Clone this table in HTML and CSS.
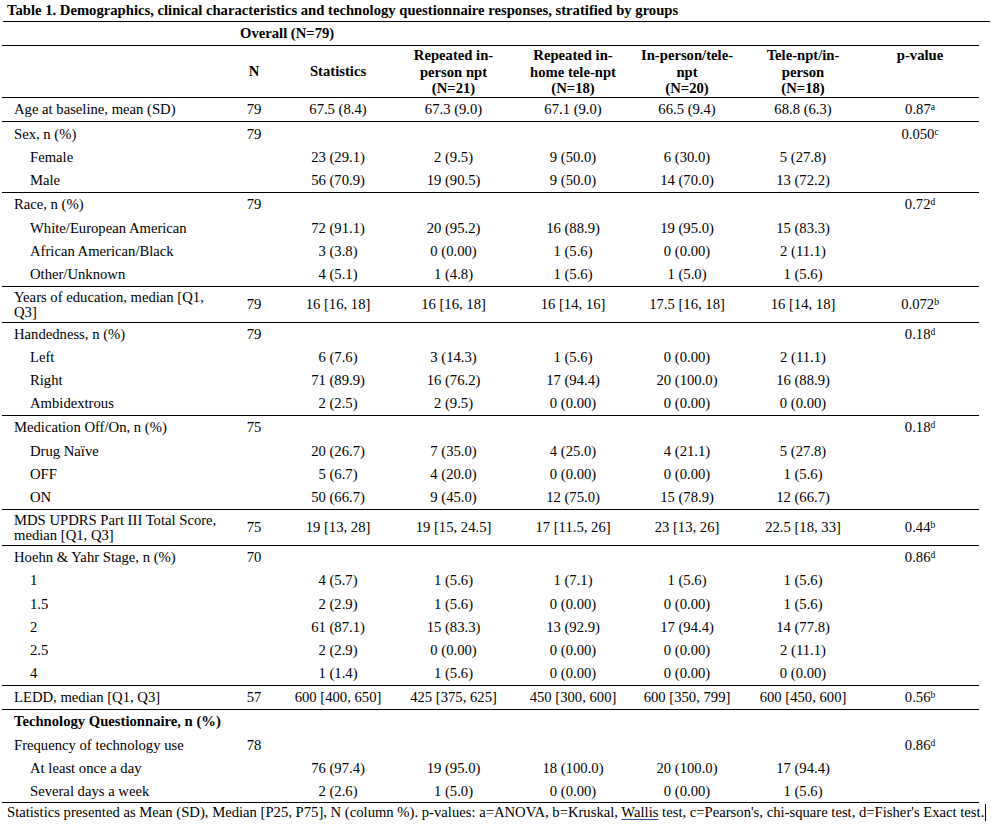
FILE: index.html
```html
<!DOCTYPE html>
<html>
<head>
<meta charset="utf-8">
<title>Table 1</title>
<link rel="stylesheet" href="styles.css">
</head>
<body>
<div class="title">Table 1. Demographics, clinical characteristics and technology questionnaire responses, stratified by groups</div>
<table class="t">
<colgroup>
<col class="c-label"><col class="c-n"><col class="c-stat"><col class="c-g1"><col class="c-g2"><col class="c-g3"><col class="c-g4"><col class="c-p">
</colgroup>
<tr class="h24 sep"><td></td><td colspan="2" class="overall">Overall (N=79)</td><td></td><td></td><td></td><td></td><td></td></tr>
<tr class="head sep"><th></th><th class="mid">N</th><th class="mid">Statistics</th><th>Repeated in-<br>person npt<br>(N=21)</th><th>Repeated in-<br>home tele-npt<br>(N=18)</th><th>In-person/tele-<br>npt<br>(N=20)</th><th>Tele-npt/in-<br>person<br>(N=18)</th><th>p-value</th></tr>
<tr class="h24 sep"><td class="lab">Age at baseline, mean (SD)</td><td>79</td><td>67.5 (8.4)</td><td>67.3 (9.0)</td><td>67.1 (9.0)</td><td>66.5 (9.4)</td><td>68.8 (6.3)</td><td>0.87<sup>a</sup></td></tr>
<tr class="h24"><td class="lab">Sex, n (%)</td><td>79</td><td></td><td></td><td></td><td></td><td></td><td>0.050<sup>c</sup></td></tr>
<tr class="h23"><td class="sub">Female</td><td></td><td>23 (29.1)</td><td>2 (9.5)</td><td>9 (50.0)</td><td>6 (30.0)</td><td>5 (27.8)</td><td></td></tr>
<tr class="h24 sep"><td class="sub">Male</td><td></td><td>56 (70.9)</td><td>19 (90.5)</td><td>9 (50.0)</td><td>14 (70.0)</td><td>13 (72.2)</td><td></td></tr>
<tr class="h23"><td class="lab">Race, n (%)</td><td>79</td><td></td><td></td><td></td><td></td><td></td><td>0.72<sup>d</sup></td></tr>
<tr class="h24"><td class="sub">White/European American</td><td></td><td>72 (91.1)</td><td>20 (95.2)</td><td>16 (88.9)</td><td>19 (95.0)</td><td>15 (83.3)</td><td></td></tr>
<tr class="h23"><td class="sub">African American/Black</td><td></td><td>3 (3.8)</td><td>0 (0.00)</td><td>1 (5.6)</td><td>0 (0.00)</td><td>2 (11.1)</td><td></td></tr>
<tr class="h24 sep"><td class="sub">Other/Unknown</td><td></td><td>4 (5.1)</td><td>1 (4.8)</td><td>1 (5.6)</td><td>1 (5.0)</td><td>1 (5.6)</td><td></td></tr>
<tr class="h36 sep"><td class="lab">Years of education, median [Q1,<br>Q3]</td><td>79</td><td>16 [16, 18]</td><td>16 [16, 18]</td><td>16 [14, 16]</td><td>17.5 [16, 18]</td><td>16 [14, 18]</td><td>0.072<sup>b</sup></td></tr>
<tr class="h23"><td class="lab">Handedness, n (%)</td><td>79</td><td></td><td></td><td></td><td></td><td></td><td>0.18<sup>d</sup></td></tr>
<tr class="h23"><td class="sub">Left</td><td></td><td>6 (7.6)</td><td>3 (14.3)</td><td>1 (5.6)</td><td>0 (0.00)</td><td>2 (11.1)</td><td></td></tr>
<tr class="h23"><td class="sub">Right</td><td></td><td>71 (89.9)</td><td>16 (76.2)</td><td>17 (94.4)</td><td>20 (100.0)</td><td>16 (88.9)</td><td></td></tr>
<tr class="h24 sep"><td class="sub">Ambidextrous</td><td></td><td>2 (2.5)</td><td>2 (9.5)</td><td>0 (0.00)</td><td>0 (0.00)</td><td>0 (0.00)</td><td></td></tr>
<tr class="h23"><td class="lab">Medication Off/On, n (%)</td><td>75</td><td></td><td></td><td></td><td></td><td></td><td>0.18<sup>d</sup></td></tr>
<tr class="h24"><td class="sub">Drug Naïve</td><td></td><td>20 (26.7)</td><td>7 (35.0)</td><td>4 (25.0)</td><td>4 (21.1)</td><td>5 (27.8)</td><td></td></tr>
<tr class="h23"><td class="sub">OFF</td><td></td><td>5 (6.7)</td><td>4 (20.0)</td><td>0 (0.00)</td><td>0 (0.00)</td><td>1 (5.6)</td><td></td></tr>
<tr class="h24 sep"><td class="sub">ON</td><td></td><td>50 (66.7)</td><td>9 (45.0)</td><td>12 (75.0)</td><td>15 (78.9)</td><td>12 (66.7)</td><td></td></tr>
<tr class="h36 sep"><td class="lab">MDS UPDRS Part III Total Score,<br>median [Q1, Q3]</td><td>75</td><td>19 [13, 28]</td><td>19 [15, 24.5]</td><td>17 [11.5, 26]</td><td>23 [13, 26]</td><td>22.5 [18, 33]</td><td>0.44<sup>b</sup></td></tr>
<tr class="h23"><td class="lab">Hoehn &amp; Yahr Stage, n (%)</td><td>70</td><td></td><td></td><td></td><td></td><td></td><td>0.86<sup>d</sup></td></tr>
<tr class="h23"><td class="sub">1</td><td></td><td>4 (5.7)</td><td>1 (5.6)</td><td>1 (7.1)</td><td>1 (5.6)</td><td>1 (5.6)</td><td></td></tr>
<tr class="h24"><td class="sub">1.5</td><td></td><td>2 (2.9)</td><td>1 (5.6)</td><td>0 (0.00)</td><td>0 (0.00)</td><td>1 (5.6)</td><td></td></tr>
<tr class="h23"><td class="sub">2</td><td></td><td>61 (87.1)</td><td>15 (83.3)</td><td>13 (92.9)</td><td>17 (94.4)</td><td>14 (77.8)</td><td></td></tr>
<tr class="h23"><td class="sub">2.5</td><td></td><td>2 (2.9)</td><td>0 (0.00)</td><td>0 (0.00)</td><td>0 (0.00)</td><td>2 (11.1)</td><td></td></tr>
<tr class="h24 sep"><td class="sub">4</td><td></td><td>1 (1.4)</td><td>1 (5.6)</td><td>0 (0.00)</td><td>0 (0.00)</td><td>0 (0.00)</td><td></td></tr>
<tr class="h24 sep"><td class="lab">LEDD, median [Q1, Q3]</td><td>57</td><td>600 [400, 650]</td><td>425 [375, 625]</td><td>450 [300, 600]</td><td>600 [350, 799]</td><td>600 [450, 600]</td><td>0.56<sup>b</sup></td></tr>
<tr class="h23"><td class="lab bold" colspan="3">Technology Questionnaire, n (%)</td><td></td><td></td><td></td><td></td><td></td></tr>
<tr class="h24"><td class="lab">Frequency of technology use</td><td>78</td><td></td><td></td><td></td><td></td><td></td><td>0.86<sup>d</sup></td></tr>
<tr class="h23"><td class="sub">At least once a day</td><td></td><td>76 (97.4)</td><td>19 (95.0)</td><td>18 (100.0)</td><td>20 (100.0)</td><td>17 (94.4)</td><td></td></tr>
<tr class="h23 sep"><td class="sub">Several days a week</td><td></td><td>2 (2.6)</td><td>1 (5.0)</td><td>0 (0.00)</td><td>0 (0.00)</td><td>1 (5.6)</td><td></td></tr>
</table>
<div class="foot">Statistics presented as Mean (SD), Median [P25, P75], N (column %). p-values: a=ANOVA, b=Kruskal, <span class="spell">Wallis</span> test, c=Pearson's, chi-square test, d=Fisher's Exact test.<span class="caret"></span></div>
</body>
</html>
```
FILE: styles.css
```css
html, body {
  margin: 0;
  padding: 0;
  background: #fff;
}
body {
  font-family: "Liberation Serif", "Times New Roman", serif;
  font-size: 14.67px;
  color: #000;
}
.title {
  box-sizing: border-box;
  margin-left: 3px;
  width: 987px;
  height: 22px;
  padding-left: 4px;
  border-bottom: 1px solid #000;
  font-weight: bold;
  line-height: 21px;
  white-space: nowrap;
}
.t {
  border-collapse: separate;
  border-spacing: 0;
  margin-left: 2px;
  width: 977px;
  table-layout: fixed;
}
.c-label { width: 220px; }
.c-n { width: 64px; }
.c-stat { width: 104px; }
.c-g1 { width: 127px; }
.c-g2 { width: 112px; }
.c-g3 { width: 116px; }
.c-g4 { width: 116px; }
.c-p { width: 118px; }
.t td, .t th {
  padding: 0;
  line-height: 15px;
  text-align: center;
  vertical-align: middle;
  white-space: nowrap;
}
.t th {
  font-weight: bold;
  vertical-align: top;
  line-height: 16.5px;
  padding-top: 1px;
}
.t th.mid {
  vertical-align: middle;
  padding-top: 0;
}
.sep td, .sep th {
  border-bottom: 1px solid #000;
}
.h23 { height: 23px; }
.h24 { height: 24px; }
.h36 { height: 36px; }
.head { height: 52px; }
.t td.overall {
  text-align: left;
  padding-left: 18px;
  font-weight: bold;
}
.t td.lab {
  text-align: left;
  padding-left: 12px;
}
.t td.sub {
  text-align: left;
  padding-left: 28px;
}
.t td.bold {
  font-weight: bold;
}
sup {
  font-size: 9.5px;
  line-height: 0;
  vertical-align: 4px;
}
.foot {
  margin-left: 7px;
  line-height: 18px;
  white-space: nowrap;
}
.spell {
  text-decoration: underline;
  text-decoration-color: #2f4f9a;
  text-underline-offset: 2px;
}
.caret {
  display: inline-block;
  width: 0;
  height: 17px;
  border-left: 1px solid #000;
  vertical-align: -4px;
  margin-left: 1px;
}
```
